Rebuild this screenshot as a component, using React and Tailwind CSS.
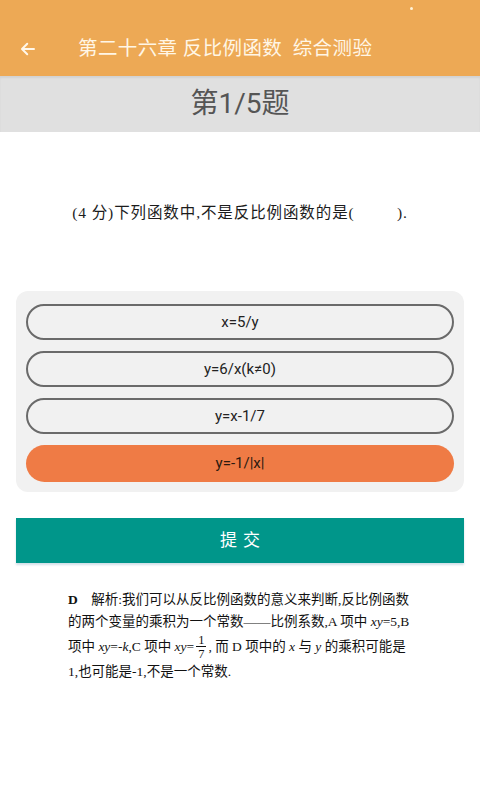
import React from 'react';

const options = [
    { label: 'x=5/y', active: false },
    { label: 'y=6/x(k≠0)', active: false },
    { label: 'y=x-1/7', active: false },
    { label: 'y=-1/|x|', active: true },
];

const serif = { fontFamily: '"Liberation Serif", "Noto Sans CJK SC", serif' };

const App = () => {
    return (
        <div className="w-[480px] h-[800px] bg-white flex flex-col" style={{ fontFamily: 'Roboto, "Noto Sans CJK SC", sans-serif' }}>
            {/* header */}
            <div className="h-[76px] bg-[#eda955] flex items-center pt-[22px] relative">
                <span className="absolute right-[67px] top-[7px] w-[3px] h-[3px] rounded-full bg-[#fff3d8]"></span>
                <div className="w-[78px] flex justify-center pr-[22px]">
                    <svg width="18" height="18" viewBox="0 0 24 24" fill="none" stroke="#fff7ea" strokeWidth="2.6" strokeLinecap="round" strokeLinejoin="round">
                        <path d="M20 12H5" />
                        <path d="M11 5l-7 7 7 7" />
                    </svg>
                </div>
                <h1 className="text-[19.5px] text-[#fff6e6] tracking-[0.4px]">第二十六章 反比例函数&nbsp; 综合测验</h1>
            </div>

            {/* question index */}
            <div className="h-[56px] bg-[#e0e0e0] flex items-center justify-center shadow-[inset_0_2px_2px_rgba(0,0,0,0.06)]">
                <span className="text-[28px] text-[#555555]">第1/5题</span>
            </div>

            {/* question */}
            <div className="h-[159px] flex items-center justify-center pb-[2px]">
                <p className="text-[15.5px] text-[#1c1c1c] tracking-[0.9px] mt-[4px]" style={serif}>
                    (4 分)下列函数中,不是反比例函数的是(　　&nbsp;&nbsp;).
                </p>
            </div>

            {/* options */}
            <div className="mx-[16px] bg-[#f1f1f1] rounded-[12px] px-[10px] pt-[13px] pb-[10px] flex flex-col gap-[11px]">
                {options.map((o) => (
                    <div
                        key={o.label}
                        className={
                            o.active
                                ? 'h-[37px] rounded-full bg-[#ef7b45] flex items-center justify-center text-[15px] text-[#2a1a10]'
                                : 'h-[36px] rounded-full border-2 border-[#6a6a6a] flex items-center justify-center text-[15px] text-[#222222]'
                        }
                    >
                        {o.label}
                    </div>
                ))}
            </div>

            {/* submit */}
            <div className="mx-[16px] mt-[26px] h-[45px] bg-[#00968a] flex items-center justify-center shadow-[0_2px_2px_rgba(0,80,120,0.18)]">
                <span className="text-[17px] text-white tracking-[6px] pl-[6px]">提交</span>
            </div>

            {/* explanation */}
            <div className="ml-[68px] mt-[26px] text-[13.5px] text-[#111111] leading-[22px]" style={serif}>
                <div><b>D</b>　解析:我们可以从反比例函数的意义来判断,反比例函数</div>
                <div>的两个变量的乘积为一个常数——比例系数,A 项中 <i>xy</i>=5,B</div>
                <div className="flex items-center h-[28px]">
                    <span>项中 <i>xy</i>=-<i>k</i>,C 项中 <i>xy</i>=</span>
                    <span className="inline-flex flex-col items-center text-[12.5px] leading-[12px] mx-[2px]">
                        <span>1</span>
                        <span className="border-t border-[#111111] px-[2px] pt-[1px]">7</span>
                    </span>
                    <span>, 而 D 项中的 <i>x</i> 与 <i>y</i> 的乘积可能是</span>
                </div>
                <div>1,也可能是-1,不是一个常数.</div>
            </div>
        </div>
    );
};

export default App;
